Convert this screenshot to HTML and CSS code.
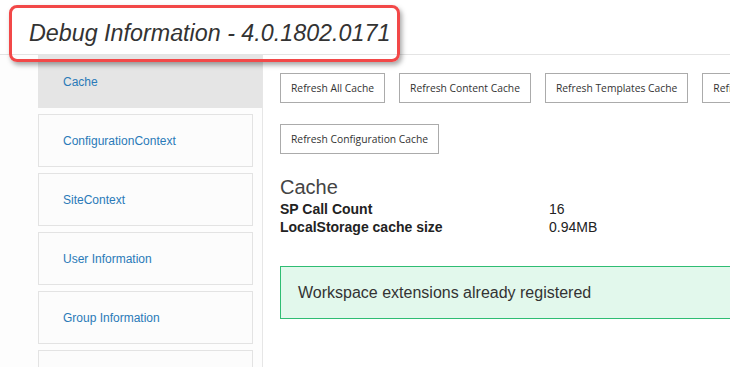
FILE: index.html
```html
<!DOCTYPE html>
<html lang="en">
<head>
    <meta charset="UTF-8">
    <meta name="viewport" content="width=device-width, initial-scale=1.0">
    <title>Debug Information</title>
    <link rel="stylesheet" href="styles.css">
</head>
<body>
    <header class="page-header">
        <h1 class="page-title">Debug Information - 4.0.1802.0171</h1>
        <div class="callout"></div>
    </header>
    <div class="layout">
        <nav class="sidebar">
            <a class="nav-item active" href="#">Cache</a>
            <a class="nav-item" href="#">ConfigurationContext</a>
            <a class="nav-item" href="#">SiteContext</a>
            <a class="nav-item" href="#">User Information</a>
            <a class="nav-item" href="#">Group Information</a>
            <a class="nav-item" href="#">Lists</a>
        </nav>
        <main class="content">
            <div class="button-row">
                <button class="btn">Refresh All Cache</button>
                <button class="btn">Refresh Content Cache</button>
                <button class="btn">Refresh Templates Cache</button>
                <button class="btn">Refresh Lists Cache</button>
            </div>
            <div class="button-row">
                <button class="btn">Refresh Configuration Cache</button>
            </div>
            <h2 class="section-title">Cache</h2>
            <table class="info-table">
                <tr>
                    <th>SP Call Count</th>
                    <td>16</td>
                </tr>
                <tr>
                    <th>LocalStorage cache size</th>
                    <td>0.94MB</td>
                </tr>
            </table>
            <div class="alert">Workspace extensions already registered</div>
        </main>
    </div>
</body>
</html>
```

FILE: styles.css
```css
html, body { height: 100%; }
body { margin: 0; font-family: "Liberation Sans", Arial, sans-serif; background-color: #fdfdfd; color: #333; overflow: hidden; }

.page-header { position: relative; height: 55px; box-sizing: border-box; background-color: #fff; border-bottom: 1px solid #e4e4e4; }
.page-title { margin: 0; padding: 19px 0 0 29px; font-size: 23.3px; font-weight: normal; font-style: italic; color: #333; line-height: 28px; }
.callout { position: absolute; left: 9px; top: 5px; width: 391px; height: 57px; box-sizing: border-box; border: 3px solid #f24848; border-radius: 8px; box-shadow: 2px 3px 5px rgba(0, 0, 0, 0.35); z-index: 2; }

.layout { display: flex; padding-left: 38px; height: calc(100% - 55px); }

.sidebar { width: 225px; box-sizing: border-box; flex-shrink: 0; border-right: 1px solid #e6e6e6; background-color: #fdfdfd; display: flex; flex-direction: column; gap: 6px; }
.nav-item { display: flex; align-items: center; box-sizing: border-box; width: 215px; height: 53px; padding-left: 24px; border: 1px solid #e3e3e3; background-color: #fcfcfc; color: #2a7ab8; font-size: 12px; text-decoration: none; flex-shrink: 0; }
.nav-item.active { width: 224px; border-color: #e5e5e5; background-color: #e5e5e5; }

.content { flex: 1; min-width: 0; padding: 18px 0 0 17px; background-color: #fff; overflow: hidden; }
.button-row { display: flex; gap: 14px; margin-bottom: 21px; white-space: nowrap; }
.btn { height: 30px; padding: 0 10px; border: 1px solid #ababab; background-color: #fff; color: #333; font-family: "Open Sans", sans-serif; font-size: 10.3px; flex-shrink: 0; }

.section-title { margin: 0 0 1px; font-size: 20px; font-weight: normal; color: #444; line-height: 24px; }
.info-table { border-collapse: collapse; font-size: 14px; color: #222; }
.info-table th { width: 269px; padding: 0; text-align: left; font-weight: bold; line-height: 18px; }
.info-table td { padding: 0; line-height: 18px; }

.alert { width: 700px; margin-top: 30px; height: 53px; box-sizing: border-box; display: flex; align-items: center; padding-left: 17px; border: 1px solid #2fbd73; background-color: #e2f8ec; color: #333; font-size: 16px; }
```
